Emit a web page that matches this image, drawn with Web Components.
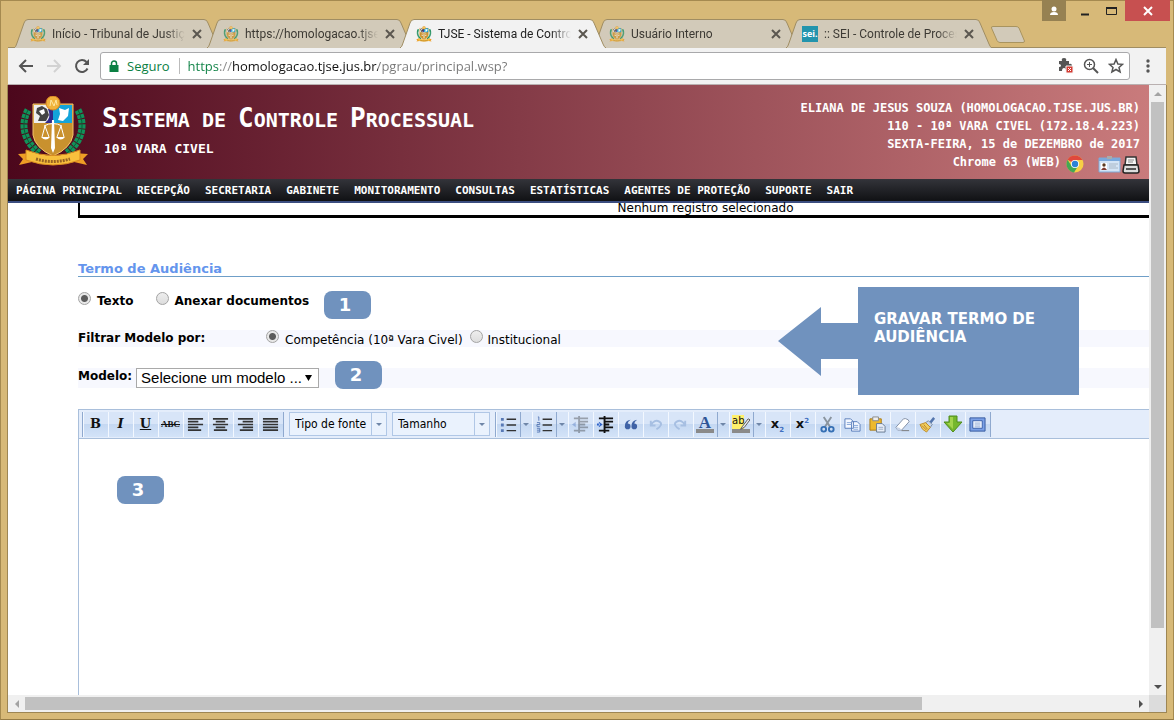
<!DOCTYPE html>
<html lang="pt-BR">
<head>
<meta charset="utf-8">
<title>TJSE - Sistema de Controle Processual</title>
<style>
  html, body { margin: 0; height: 100%; }
  body { overflow: hidden; font-family: "DejaVu Sans", sans-serif; font-size: 12px; color: #000; }
</style>
</head>
<body>
<browser-window></browser-window>

<script>
const define = (name, html, setup) => {
  const template = document.createElement('template');
  template.innerHTML = html;
  customElements.define(name, class extends HTMLElement {
    constructor() {
      super();
      this.attachShadow({ mode: 'open' }).append(template.content.cloneNode(true));
    }
    connectedCallback() {
      if (setup) setup(this, this.shadowRoot);
    }
  });
};

// Coat of arms, used in the header and as favicon
define('court-seal', `
  <style>
    :host { display: block; flex: none; width: 72px; height: 70px; }
    :host([small]) { width: 16px; height: 16px; }
    svg { display: block; width: 100%; height: 100%; }
  </style>
  <svg viewBox="0 0 72 70" aria-hidden="true">
    <g fill="none" stroke="#12925a" stroke-width="7" stroke-dasharray="4 1">
      <path d="M11 14C3 29 7 45 22 57"/>
      <path d="M61 14C69 29 65 45 50 57"/>
    </g>
    <g fill="none" stroke="#075d35" stroke-width="1"><path d="M11 14C3 29 7 45 22 57M61 14C69 29 65 45 50 57"/></g>
    <path d="M16 8H56V39Q54 52 36 60Q18 52 16 39Z" fill="#c9912e" stroke="#f2c36a"/>
    <path d="M17 9H36V27H17Z" fill="#eee"/>
    <path d="M20 12l5-2 5 3 2 6-3 6h-8l2-5-4-3z" fill="#444"/>
    <path d="M22 15l5-2 1 4-3 2z" fill="#fff"/>
    <path d="M31 13H36V27H28Q35 22 31 13Z" fill="#312a8a"/>
    <path d="M36 9H55V27H36Z" fill="#13a4da"/>
    <path d="M42 12l6 2 4-2-1 8-5 5-5-1 2-6z" fill="#fff"/>
    <path d="M35 24h2l1 28-2 5-2-5z" fill="#fff"/>
    <path d="M27 30q9-5 18 0M28 30l-3 11M28 30l4 11M44 30l-4 11M44 30l3 11" fill="none" stroke="#fff"/>
    <path d="M24 41h9q-4 5-9 0zM39 41h9q-4 5-9 0z" fill="#fff"/>
    <circle cx="36" cy="7" r="7" fill="#f1b33c" stroke="#d98520"/>
    <path d="M33 10l1-6 3 6 2-6 1 5" fill="none" stroke="#ffe6a0"/>
    <path d="M1 58l14-1v9l-13 3 4-6zM71 58l-14-1v9l13 3-4-6z" fill="#ee9e25"/>
    <path d="M9 54Q36 65 63 54V64Q36 74 9 64Z" fill="#f8c03d" stroke="#d98b20"/>
    <path d="M19 63Q36 68 53 63" fill="none" stroke="#986322" stroke-width="3" stroke-dasharray="2 1"/>
  </svg>
`);

define('browser-tab', `
  <style>
    :host { display: block; position: relative; flex: 0 1 206px; min-width: 0; height: 29px; margin-right: -13px; color: #3d3a34; }
    :host([active]) { z-index: 1; color: #222; }
    .shape { position: absolute; inset: 0; width: 100%; height: 100%; fill: #d2cab9; stroke: #a08d62; }
    :host([active]) .shape { fill: #f2f2f2; }
    .row { position: relative; display: flex; align-items: center; height: 29px; padding: 0 17px 0 16px; gap: 6px; }
    court-seal { opacity: .8; }
    :host([active]) court-seal { opacity: 1; }
    .title { flex: 1; overflow: hidden; white-space: nowrap; font: 12px/20px Roboto, sans-serif;
      -webkit-mask-image: linear-gradient(to right, #000 85%, transparent); mask-image: linear-gradient(to right, #000 85%, transparent); }
    button { flex: none; width: 12px; height: 12px; padding: 0; border: 0; background: none; }
    button svg { display: block; }
  </style>
  <svg class="shape" viewBox="0 0 206 29" preserveAspectRatio="none" aria-hidden="true"><path d="M0 29Q2 28 3 24L10 4Q11 .5 14 .5H190Q193 .5 194 4L203 25Q204 28 206 29"/></svg>
  <div class="row">
    <slot name="icon"><court-seal small></court-seal></slot>
    <span class="title"><slot></slot></span>
    <button aria-label="Fechar guia"><svg width="12" height="12" viewBox="0 0 12 12"><path d="M2 2l8 8M10 2l-8 8" stroke="#5b5750" stroke-width="2"/></svg></button>
  </div>
`);

define('tab-strip', `
  <style>
    :host { display: flex; height: 48px; justify-content: space-between; }
    .tabs { display: flex; align-items: flex-end; flex: 1; min-width: 0; padding-left: 6px; box-sizing: border-box; }
    .new { flex: none; width: 36px; height: 19px; padding: 0; border: 0; background: none; margin: 0 0 4px 11px; }
    .new svg { display: block; }
    .sei { display: block; width: 16px; height: 16px; background: #2294ad; color: #fff; font: bold 9px/15px "Open Sans", sans-serif; text-align: center; }
    .controls { display: flex; align-items: flex-start; margin-right: -4px; }
    .controls button { padding: 0; border: 0; height: 21px; background: none; display: grid; place-items: center; }
    .controls .user { width: 24px; background: #968152; margin-right: 5px; }
    .controls .min, .controls .max { width: 27px; }
    .controls .close { width: 45px; background: #c75050; }
  </style>
  <div class="tabs">
    <browser-tab>Início - Tribunal de Justiça</browser-tab>
    <browser-tab>https://homologacao.tjse</browser-tab>
    <browser-tab active>TJSE - Sistema de Controle</browser-tab>
    <browser-tab>Usuário Interno</browser-tab>
    <browser-tab><span slot="icon" class="sei">sei.</span>:: SEI - Controle de Proces</browser-tab>
    <button class="new" aria-label="Nova guia"><svg width="36" height="19" viewBox="0 0 36 19"><path d="M3 1.500H26Q28 1.500 29 3L34.500 16Q34.500 17.500 33 17.500H10Q8 17.500 7 15.500L1.500 3Q1 1.500 3 1.500Z" fill="#d2cab9" stroke="#a9945f"/></svg></button>
  </div>
  <div class="controls">
    <button class="user" aria-label="Usuário"><svg width="10" height="10" viewBox="0 0 10 10" fill="#fff"><circle cx="5" cy="3" r="2.500"/><path d="M1 9Q1 6 5 6T9 9Z"/></svg></button>
    <button class="min" aria-label="Minimizar"><svg width="10" height="10"><path d="M1 8.500H9" stroke="#222" stroke-width="2"/></svg></button>
    <button class="max" aria-label="Maximizar"><svg width="11" height="10"><path d="M.5 2H10.500V8.500H.5Z" fill="none" stroke="#222"/><path d="M0 2H11" stroke="#222" stroke-width="2"/></svg></button>
    <button class="close" aria-label="Fechar"><svg width="10" height="10"><path d="M1 1l8 8M9 1l-8 8" stroke="#fff" stroke-width="2"/></svg></button>
  </div>
`);

define('address-bar', `
  <style>
    :host { display: flex; align-items: center; height: 38px; padding: 0 8px; background: #f2f2f2; border-bottom: 1px solid #b9b0b0; border-top: 1px solid #a08d62; margin-top: -1px; box-sizing: border-box; }
    button { padding: 0; border: 0; background: none; width: 20px; height: 20px; display: grid; place-items: center; flex: none; }
    .nav { display: flex; gap: 8px; margin-right: 8px; }
    .box { flex: 1; min-width: 0; display: flex; align-items: center; box-sizing: border-box; height: 28px; padding: 0 3px 0 8px; margin-right: 8px; background: #fff; border: 1px solid #a9a9ab; border-radius: 3px; font: 13px/20px "Open Sans", sans-serif; }
    .secure { color: #0b8043; margin: 0 9px 0 8px; }
    .rule { width: 1px; height: 16px; background: #bbb; margin-right: 8px; }
    .url { flex: 1; min-width: 0; padding: 0; border: 0; outline: 0; font: inherit; color: #777;
      background: linear-gradient(to right, #0b8043 32px, #888 32px 45px, #111 45px 190px, #777 190px); -webkit-background-clip: text; background-clip: text; -webkit-text-fill-color: transparent; }
    .actions { display: flex; gap: 5px; }
  </style>
  <div class="nav">
    <button aria-label="Voltar"><svg width="16" height="16" viewBox="0 0 16 16" fill="none" stroke="#555" stroke-width="2"><path d="M15 8H2M8 2L2 8L8 14"/></svg></button>
    <button aria-label="Avançar"><svg width="16" height="16" viewBox="0 0 16 16" fill="none" stroke="#d2d2d2" stroke-width="2"><path d="M1 8H14M8 2L14 8L8 14"/></svg></button>
    <button aria-label="Recarregar"><svg width="16" height="16" viewBox="0 0 16 16"><path d="M13.500 10.500A6 6 0 1 1 12.500 4" fill="none" stroke="#555" stroke-width="2"/><path d="M15 1V7H9Z" fill="#555"/></svg></button>
  </div>
  <div class="box">
    <svg width="10" height="13" viewBox="0 0 10 13" aria-hidden="true"><path d="M2.500 6V3.500A2.500 2.500 0 0 1 7.500 3.500V6" fill="none" stroke="#0b8043" stroke-width="1.500"/><path d="M.5 5H9.500V12H.5Z" fill="#0b8043"/></svg>
    <span class="secure">Seguro</span><span class="rule"></span>
    <input class="url" aria-label="Endereço" value="https://homologacao.tjse.jus.br/pgrau/principal.wsp?" spellcheck="false">
    <div class="actions">
      <button aria-label="Plug-in bloqueado"><svg width="18" height="18" viewBox="0 0 18 18"><path d="M2 4H5Q4 1 7 1T9 4H12V7Q15 6 15 9T12 11V14H9Q9 11 7 11T5 14H2V10Q4 10 4 8.500T2 7Z" fill="#555"/><path d="M9 9H16V16H9Z" fill="#d33b32" stroke="#f8f8f8"/><path d="M11 11l3 3M14 11l-3 3" stroke="#fff"/></svg></button>
      <button aria-label="Zoom"><svg width="16" height="16" viewBox="0 0 16 16" fill="none" stroke="#555"><circle cx="6.500" cy="6.500" r="5" stroke-width="1.500"/><path d="M10 10l5 5" stroke-width="2"/><path d="M4 6.500H9M6.500 4V9"/></svg></button>
      <button aria-label="Favoritos"><svg width="16" height="16" viewBox="0 0 16 16"><path d="M8 1.500L9.900 6L14.600 6.300L11 9.400L12.100 14L8 11.500L3.900 14L5 9.400L1.400 6.300L6.100 6Z" fill="none" stroke="#555" stroke-width="1.500"/></svg></button>
    </div>
  </div>
  <button aria-label="Menu"><svg width="4" height="16" fill="#555"><circle cx="2" cy="3" r="1.700"/><circle cx="2" cy="8" r="1.700"/><circle cx="2" cy="13" r="1.700"/></svg></button>
`);

define('scroll-bar', `
  <style>
    :host { display: flex; flex-direction: column; background: #f0f0f0; width: 17px; }
    :host([horizontal]) { flex-direction: row; width: auto; height: 17px; }
    .end { flex: none; width: 17px; height: 17px; display: grid; place-items: center; }
    .track { flex: 1; display: flex; flex-direction: inherit; padding: 0 2px; }
    :host([horizontal]) .track { padding: 2px 0; }
    .thumb { flex: 0 0 var(--thumb); background: #c1c1c1; }
    .start svg { fill: #a3a3a3; }
    svg { fill: #505050; }
    :host([horizontal]) svg { transform: rotate(-90deg); }
  </style>
  <div class="end start"><svg width="8" height="4"><path d="M0 4L4 0L8 4Z"/></svg></div>
  <div class="track"><div class="thumb"></div></div>
  <div class="end"><svg width="8" height="4"><path d="M0 0L4 4L8 0Z"/></svg></div>
`);

define('court-header', `
  <style>
    :host { display: flex; align-items: flex-start; height: 94px; box-sizing: border-box; padding: 11px 9px 0 9px; color: #fff; font: bold 12px/18px "DejaVu Sans Mono", monospace; background: linear-gradient(to right, #4c071c, #c97b7c); }
    .names { flex: 1; padding: 8px 0 0 13px; white-space: nowrap; }
    h1 { margin: 0; font-size: 20px; line-height: 28px; font-weight: bold; text-transform: uppercase; }
    h1 span { display: inline-block; }
    h1 span::first-letter { font-size: 26px; }
    h2 { margin: 6px 0 0 2px; font-size: 13px; line-height: 18px; }
    .session { padding-top: 3px; text-align: right; white-space: nowrap; }
    .client { display: flex; justify-content: flex-end; align-items: center; height: 18px; }
    .client svg { flex: none; overflow: visible; }
    .chrome { margin: 0 14px 0 5px; }
  </style>
  <court-seal></court-seal>
  <div class="names">
    <h1><span>Sistema</span> de <span>Controle</span> <span>Processual</span></h1>
    <h2>10ª VARA CIVEL</h2>
  </div>
  <div class="session">
    <div>ELIANA DE JESUS SOUZA (HOMOLOGACAO.TJSE.JUS.BR)</div>
    <div>110 - 10ª VARA CIVEL (172.18.4.223)</div>
    <div>SEXTA-FEIRA, 15 de DEZEMBRO de 2017</div>
    <div class="client">Chrome 63 (WEB)
      <svg class="chrome" width="18" height="18" viewBox="0 -2 18 18" aria-hidden="true"><circle cx="9" cy="9" r="8.500" fill="#f7cf45"/><path d="M9 9L1.600 4.700A8.500 8.500 0 0 1 16.400 5H9Z" fill="#e0483c"/><path d="M9 9L5.500 11L1.600 4.700A8.500 8.500 0 0 0 8 17.400L11.500 12Z" fill="#43a854"/><circle cx="9" cy="9" r="4" fill="#fff"/><circle cx="9" cy="9" r="3.200" fill="#2c82d6"/></svg>
      <svg width="24" height="18" viewBox="0 -2 24 18" aria-hidden="true"><path d="M1 3H22V17H1Z" fill="#d4e4f5" stroke="#7fa8d4"/><path d="M1 3H22V6H1Z" fill="#7aa9dc"/><path d="M9 1H14V4H9Z" fill="#aaa"/><path d="M3 8H9V15H3Z" fill="#fff"/><circle cx="6" cy="10" r="1.700" fill="#5a3a20"/><path d="M3 15Q6 10 9 15Z" fill="#7d3a30"/><path d="M11 9H20M11 11H18M11 13H20" stroke="#aab8c6"/></svg>
      <svg width="18" height="18" viewBox="0 -3 18 18" aria-hidden="true"><path d="M4 1H14L15 9H3Z" fill="#f5f5f5" stroke="#333" stroke-width="1.500"/><path d="M6 4H12M6 6H11" stroke="#888"/><path d="M2 9H16L17 15Q17 17 15 17H3Q1 17 1 15Z" fill="#ddd" stroke="#222" stroke-width="1.500"/><path d="M4 12H14V14H4Z" fill="#555"/></svg>
    </div>
  </div>
`);

define('main-menu', `
  <style>
    :host { display: block; background: linear-gradient(#33343a, #101114); border-bottom: 2px solid #3b4d80; }
    nav { display: flex; gap: 15px; padding: 0 8px; height: 22px; overflow: hidden; }
    a { color: #fff; text-decoration: none; white-space: nowrap; font: bold 11px/23px "DejaVu Sans Mono", monospace; }
  </style>
  <nav></nav>
`, (host, root) => {
  const items = ['PÁGINA PRINCIPAL', 'RECEPÇÃO', 'SECRETARIA', 'GABINETE', 'MONITORAMENTO', 'CONSULTAS', 'ESTATÍSTICAS', 'AGENTES DE PROTEÇÃO', 'SUPORTE', 'SAIR'];
  root.querySelector('nav').innerHTML = items.map(t => `<a href="#">${t}</a>`).join('');
});

const svg = body => `<svg width="17" height="17" viewBox="0 0 18 18" aria-hidden="true">${body}</svg>`;
const lines = d => svg(`<path d="${d}" stroke="#333" stroke-width="1.700" fill="none"/>`);
const icons = {
  bold: '<b>B</b>',
  italic: '<b><i>I</i></b>',
  underline: '<b><u>U</u></b>',
  strike: '<s>ABC</s>',
  left: lines('M1 3H17M1 6H12M1 9H17M1 12H12M1 15H15'),
  center: lines('M1 3H17M4 6H14M1 9H17M4 12H14M2 15H16'),
  right: lines('M1 3H17M6 6H17M1 9H17M6 12H17M3 15H17'),
  justify: lines('M1 3H17M1 6H17M1 9H17M1 12H17M1 15H17'),
  bullets: svg('<path d="M1 2H4V5H1ZM1 8H4V11H1ZM1 14H4V17H1Z" fill="#5879b5"/><path d="M7 3.500H17M7 9.500H17M7 15.500H17" stroke="#333" stroke-width="1.500"/>'),
  numbers: svg('<path d="M2 1H3V5M1 7H4V9H1V11H4M1 13H4V17H1M1 15H4" fill="none" stroke="#5879b5"/><path d="M7 3.500H17M7 9.500H17M7 15.500H17" stroke="#333" stroke-width="1.500"/>'),
  outdent: svg('<g opacity=".35"><path d="M2 2.500H17M8 6H17M8 9H14M8 12H17M2 15.500H14M7.500 0V18" stroke="#222" stroke-width="2" fill="none"/><path d="M0 9L4 6V12Z" fill="#3f68b8"/></g>'),
  indent: svg('<path d="M2 2.500H17M8 6H17M8 9H13M8 12H17M2 15.500H13M8 0V18" stroke="#111" stroke-width="2" fill="none"/><path d="M6 9L2 6V12ZM0 8H3V10H0Z" fill="#2f62c8"/>'),
  quote: svg('<path d="M9 4Q3 5 3 11A3 3 0 1 0 6 8Q6 6 9 4ZM16 4Q10 5 10 11A3 3 0 1 0 13 8Q13 6 16 4Z" fill="#3f62a6"/>'),
  undo: svg('<path d="M4 5V10H9M4 10Q8 3 13 6T10 14" fill="none" stroke="#a7bfe2" stroke-width="2"/>'),
  redo: svg('<path d="M14 5V10H9M14 10Q10 3 5 6T8 14" fill="none" stroke="#a7bfe2" stroke-width="2"/>'),
  color: '<b class="ink">A</b>',
  marker: '<span class="mark">ab</span>' + svg('<path d="M16 3L10 11L8 14L12 12L18 4Z" fill="#eee" stroke="#555"/>'),
  sub: '<b class="x">x<sub>2</sub></b>',
  sup: '<b class="x">x<sup>2</sup></b>',
  cut: svg('<path d="M5 1L12 12M13 1L6 12" stroke="#8a949e" stroke-width="2"/><circle cx="5" cy="14" r="2.500" fill="none" stroke="#356fb4" stroke-width="2"/><circle cx="13" cy="14" r="2.500" fill="none" stroke="#356fb4" stroke-width="2"/>'),
  copy: svg('<path d="M1 3H7L10 6V13H1ZM8 6H14L17 9V16H8Z" fill="#f4f8ff" stroke="#587cba"/><path d="M3 7H8M3 9H8M10 10H15M10 12H15M10 14H15" stroke="#87a7d8"/>'),
  paste: svg('<path d="M1 3H13V15H1Z" fill="#edb92e" stroke="#a97a17"/><path d="M4 1H10V5H4Z" fill="#eee" stroke="#888"/><path d="M8 8H14L17 11V17H8Z" fill="#e8eef8" stroke="#66788f"/><path d="M10 12H15M10 14H15" stroke="#9aabc3"/>'),
  erase: svg('<path d="M2 12L10 3Q12 2 15 4L16 6L8 15H4Z" fill="#fff" stroke="#7f8da5"/><path d="M2 12Q6 11 8 15H4Z" fill="#c9d5e9"/><path d="M8 15.500H16" stroke="#777"/>'),
  brush: svg('<path d="M11 6L15 1L17 3L13 8Z" fill="#5375ad"/><path d="M10 5L14 9L12 12L7 7Z" fill="#c7d5e9" stroke="#788aa4"/><path d="M1 9L7 7L12 12L8 17Q3 15 1 9Z" fill="#f2cf5d" stroke="#bd8a2b"/><path d="M3 10L8 15M5 9L9 14" stroke="#b9812b"/>'),
  down: '<svg width="20" height="18" viewBox="-1 0 20 18" aria-hidden="true"><path d="M5 1H13V7H18L9 17L0 7H5Z" fill="#75b72c" stroke="#4f8c1b"/><path d="M6 2H9V14L3 8H6Z" fill="#a3d44c"/></svg>',
  full: svg('<path d="M1 2H17V16H1Z" fill="#7ba0e6" stroke="#33589d"/><path d="M4 5H14V13H4Z" fill="#f4f8ff" stroke="#365da8"/><path d="M6 7.500H12M6 9.500H12M6 11.500H12" stroke="#91aad5"/>')
};

define('tool-button', `
  <style>
    :host { display: flex; flex: none; width: 25px; height: 25px; }
    :host([split]) { width: 36px; }
    button { box-sizing: border-box; display: grid; place-items: center; flex: 1; min-width: 0; padding: 0 1px 0 0; border: solid #f3f8ff; border-width: 0 0 0 1px; overflow: hidden; background: linear-gradient(#d8e5f8 50%, #c5d8f2 50%, #d3e3f8); font: 15px/18px "DejaVu Serif", serif; color: #111; }
    button > * { grid-area: 1 / 1; }
    .more { display: none; flex: 0 0 12px; border-left-color: #8fa9cf; }
    :host([split]) .more { display: grid; }
    b { font-size: 13px; }
    s { font: bold 9px/18px "Liberation Serif", serif; }
    .ink { width: 18px; height: 18px; font: bold 17px/15px "Liberation Serif", serif; box-sizing: border-box; border-bottom: 4px solid #8a8a8a; color: #2f5597; }
    .mark { width: 18px; height: 18px; box-sizing: border-box; border-bottom: 4px solid #8a8a8a; font: 10px/12px "DejaVu Sans", sans-serif; text-align: left; background: linear-gradient(to right, #fff06b 12px, transparent 12px); }
    .x { font: bold 13px/18px "DejaVu Sans", sans-serif; }
    sub, sup { font-size: 7px; line-height: 0; color: #3f6fc0; }
  </style>
  <button class="main"></button><button class="more" aria-label="Mais opções"><svg width="6" height="3"><path d="M0 0H6L3 3Z" fill="#6f86a8"/></svg></button>
`, (host, root) => {
  const main = root.querySelector('.main');
  main.innerHTML = icons[host.getAttribute('icon')];
  main.setAttribute('aria-label', host.getAttribute('icon'));
});

define('tool-select', `
  <style>
    :host { display: grid; grid-template-columns: 1fr 15px; flex: none; width: 98px; height: 24px; box-sizing: border-box; border: 1px solid #b0c7e6; background: #eaf2fd; }
    select { grid-area: 1 / 1 / 2 / 3; appearance: none; border: 0; padding: 0 5px; background: none; font: 12px/18px "DejaVu Sans Condensed", "DejaVu Sans", sans-serif; color: #000; }
    span { grid-area: 1 / 2; border-left: 1px solid #b0c7e6; display: grid; place-items: center; pointer-events: none; }
  </style>
  <select><option></option></select><span><svg width="6" height="3"><path d="M0 0H6L3 3Z" fill="#6f86a8"/></svg></span>
`, (host, root) => {
  root.querySelector('option').textContent = host.getAttribute('label');
  root.querySelector('select').setAttribute('aria-label', host.getAttribute('label'));
});

define('rich-editor', `
  <style>
    :host { display: flex; flex-direction: column; border: solid #a9bfdb; border-width: 1px 0 0 1px; }
    .bar { display: flex; align-items: center; gap: 5px; height: 28px; padding: 0 3px; background: #e4edfb; border-bottom: 1px solid #a9bfdb; }
    .group { display: flex; border: solid #8fa9cf; border-width: 0 1px; }
    textarea { flex: 1; resize: none; border: 0; outline: 0; padding: 8px; font: 12px/18px "DejaVu Sans", sans-serif; background: #fff; }
  </style>
  <div class="bar">
    <div class="group" data-icons="bold italic underline strike left center right justify"></div>
    <tool-select label="Tipo de fonte"></tool-select>
    <tool-select label="Tamanho"></tool-select>
    <div class="group" data-icons="bullets+ numbers+ outdent indent quote undo redo color+ marker+ sub sup cut copy paste erase brush down full"></div>
  </div>
  <textarea aria-label="Texto do termo"></textarea>
`, (host, root) => {
  for (const group of root.querySelectorAll('.group')) {
    group.innerHTML = group.dataset.icons.split(' ')
      .map(i => `<tool-button icon="${i.replace('+', '')}"${i.endsWith('+') ? ' split' : ''}></tool-button>`).join('');
  }
});

// Numbered marks and the callout lie over the form
define('step-badge', `
  <style>
    :host { position: absolute; width: 47px; height: 28px; border-radius: 8px; background: #7092be; color: #fff; font: bold 18px/28px "DejaVu Sans", sans-serif; text-align: center; text-indent: -5px; }
  </style>
  <slot></slot>
`);

define('arrow-callout', `
  <style>
    :host { position: absolute; display: flex; align-items: center; color: #fff; }
    svg { display: block; fill: #7092be; }
    div { box-sizing: border-box; width: 221px; height: 108px; padding: 23px 16px; background: #7092be; font: bold 15px/18px "DejaVu Sans", sans-serif; }
  </style>
  <svg width="80" height="69" aria-hidden="true"><path d="M0 34L43 0V16H80V52H43V69Z"/></svg>
  <div><slot></slot></div>
`);

define('hearing-form', `
  <style>
    :host { flex: 1; min-height: 0; display: flex; flex-direction: column; position: relative; padding-left: 70px; }
    .empty { flex: none; width: 117%; height: 15px; box-sizing: border-box; border: solid #000; border-width: 0 0 3px 2px; text-align: center; line-height: 10px; }
    h3 { flex: none; margin: 42px 0 14px; height: 16px; font-size: 13px; line-height: 17px; color: #6495ed; border-bottom: 1px solid #6f9fc8; }
    .row { flex: none; display: flex; height: 20px; white-space: nowrap; }
    .row b, .row label { line-height: 20px; }
    .filter { margin-top: 19px; height: 17px; background: #f7f8fe; }
    .filter b { width: 188px; line-height: 17px; }
    .filter label { line-height: 20px; margin-right: 7px; }
    .model { margin: 21px 0; background: #f7f8fe; }
    .model label { font-weight: bold; line-height: 17px; margin-right: 4px; }
    .kind label { font-weight: bold; margin-right: 23px; }
    input { appearance: none; flex: none; box-sizing: border-box; width: 13px; height: 13px; margin: 1px 5px 0 0; border: 1px solid #a3a3a3; border-radius: 50%; background: linear-gradient(#eee, #ddd); }
    input:checked { margin-right: 6px; background: radial-gradient(circle, #5c5c5c 3px, #e8e8e8 4px); }
    .filter input { margin-top: 0; }
    .pick { display: grid; width: 183px; }
    .pick select { grid-area: 1 / 1; appearance: none; width: 183px; height: 20px; box-sizing: border-box; border: 1px solid #a9a9a9; background: #fff; padding: 0 4px; font: 15px/18px "Liberation Sans", sans-serif; color: #000; }
    .pick svg { grid-area: 1 / 1; justify-self: end; align-self: center; margin-right: 7px; pointer-events: none; }
    rich-editor { flex: 1; }
  </style>
  <div class="empty">Nenhum registro selecionado</div>
  <h3>Termo de Audiência</h3>
  <div class="row kind">
    <input type="radio" name="kind" id="text" checked><label for="text">Texto</label>
    <input type="radio" name="kind" id="attach"><label for="attach">Anexar documentos</label>
  </div>
  <div class="row filter">
    <b>Filtrar Modelo por:</b>
    <input type="radio" name="filter" id="area" checked><label for="area">Competência (10ª Vara Civel)</label>
    <input type="radio" name="filter" id="inst"><label for="inst">Institucional</label>
  </div>
  <div class="row model">
    <label for="model">Modelo:</label>
    <div class="pick">
      <select id="model"><option>Selecione um modelo ...</option></select>
      <svg width="7" height="6" aria-hidden="true"><path d="M0 0H7L3.500 6Z"/></svg>
    </div>
  </div>
  <rich-editor></rich-editor>
  <step-badge style="left: 316px; top: 88px">1</step-badge>
  <step-badge style="left: 327px; top: 158px">2</step-badge>
  <step-badge style="left: 109px; top: 273px">3</step-badge>
  <arrow-callout style="left: 770px; top: 84px">GRAVAR TERMO DE AUDIÊNCIA</arrow-callout>
`);

define('browser-window', `
  <style>
    :host { display: flex; flex-direction: column; height: 100vh; box-sizing: border-box; padding: 0 7px 7px; background: #d7b978; border: 1px solid #a58a50; border-bottom-color: #957b45; }
    tab-strip { margin-top: -1px; }
    .view { flex: 1; min-height: 0; display: grid; grid-template: minmax(0, 1fr) 17px / minmax(0, 1fr) 17px; background: #dcdcdc; box-shadow: 0 0 0 1px #9d8654; clip-path: inset(0 -1px -1px -1px); }
    .page { display: flex; flex-direction: column; min-width: 0; min-height: 0; overflow: hidden; background: #fff; }
    .down { --thumb: 91.4%; }
    .across { --thumb: 81%; }
  </style>
  <tab-strip></tab-strip>
  <address-bar></address-bar>
  <div class="view">
    <div class="page">
      <court-header></court-header>
      <main-menu></main-menu>
      <hearing-form></hearing-form>
    </div>
    <scroll-bar class="down"></scroll-bar>
    <scroll-bar class="across" horizontal></scroll-bar>
  </div>
`);
</script>
</body>
</html>
